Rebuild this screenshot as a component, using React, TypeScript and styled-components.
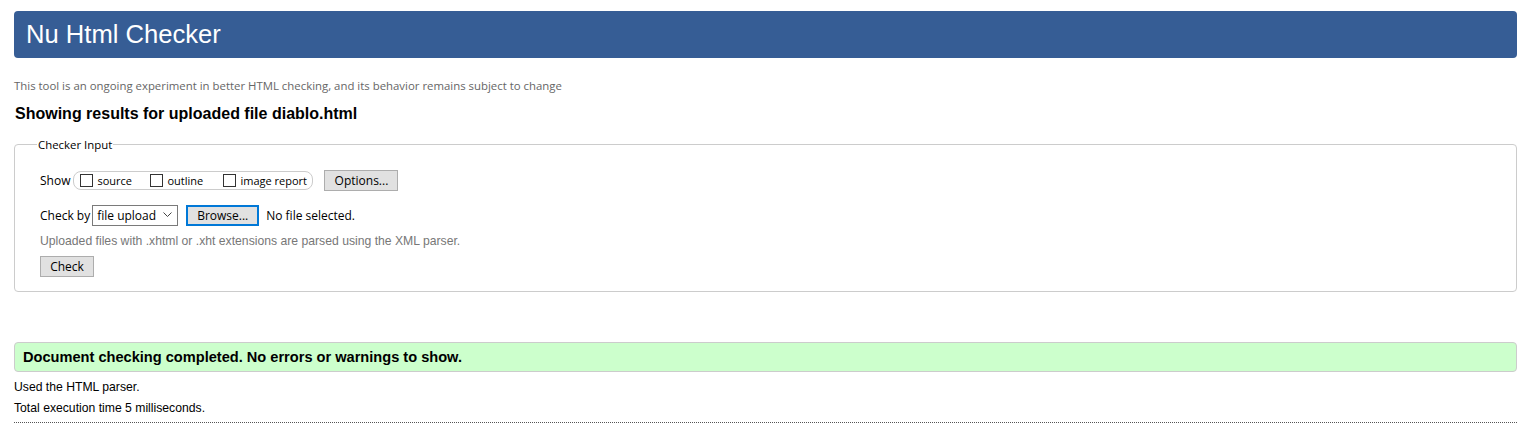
import React from "react";
import styled, { createGlobalStyle } from "styled-components";

const Global = createGlobalStyle`
  html, body { margin: 0; padding: 0; background: #fff; }
  body { font-family: "Liberation Sans", Arial, sans-serif; color: #000; }
`;

const Page = styled.div`
  padding: 11px 16px 0 14px;
  display: flex;
  flex-direction: column;
`;

const Header = styled.h1`
  margin: 0;
  height: 47px;
  background: #365d95;
  border-radius: 4px;
  color: #fff;
  font: 400 25.6px "Liberation Sans", Arial, sans-serif;
  display: flex;
  align-items: center;
  padding-left: 12px;
`;

const Intro = styled.p`
  margin: 20px 0 0 0;
  font: 400 11.4px "Open Sans", sans-serif;
  color: #666;
`;

const Title = styled.h2`
  margin: 12px 0 0 1px;
  font: 700 16px "Liberation Sans", Arial, sans-serif;
  color: #000;
`;

const Fieldset = styled.fieldset`
  margin: 14px 0 0 0;
  border: 1px solid #ccc;
  border-radius: 4px;
  padding: 8px 25px 15px 25px;
  display: flex;
  flex-direction: column;
`;

const Legend = styled.legend`
  margin-left: -3px;
  padding: 0 1px;
  font: 400 11.4px "Open Sans", sans-serif;
  color: #000;
`;

const Row = styled.div`
  display: flex;
  align-items: center;
  height: 20px;
  margin-top: ${(p: { $mt: number }) => p.$mt}px;
  font: 400 12px "Open Sans", sans-serif;
`;

const Label = styled.span`
  margin-right: 2px;
`;

const ToggleGroup = styled.div`
  display: flex;
  align-items: center;
  height: 17px;
  border: 1px solid #ccc;
  border-radius: 8px;
  padding: 0 6px;
  width: 226px;
  margin-left: 1px;
`;

const Toggle = styled.label`
  display: flex;
  align-items: center;
  font: 400 11px "Open Sans", sans-serif;
  width: ${(p: { $w: number }) => p.$w}px;
  flex: none;
`;

const Box = styled.span`
  width: 11px;
  height: 11px;
  border: 1px solid #333;
  margin-right: 4px;
  box-sizing: content-box;
  display: inline-block;
`;

const Button = styled.button<{ $focus?: boolean; $w: number }>`
  box-sizing: border-box;
  height: 21px;
  width: ${(p) => p.$w}px;
  background: #e1e1e1;
  border: ${(p) => (p.$focus ? "2px solid #0078d7" : "1px solid #adadad")};
  border-radius: 0;
  padding: 0;
  font: 400 12px "Open Sans", sans-serif;
  color: #000;
`;

const Select = styled.div`
  box-sizing: border-box;
  width: 86px;
  height: 21px;
  border: 1px solid #7a7a7a;
  display: flex;
  align-items: center;
  justify-content: space-between;
  padding: 0 5px 0 4px;
  font: 400 12px "Open Sans", sans-serif;
  margin-right: 8px;
`;

const Plain = styled.span`
  margin-left: 7px;
`;

const Hint = styled.p`
  margin: 9px 0 0 0;
  font: 400 12.2px "Liberation Sans", Arial, sans-serif;
  color: #777;
`;

const Success = styled.div`
  margin-top: 50px;
  height: 30px;
  box-sizing: border-box;
  background: #ccffcc;
  border: 1px solid #ccc;
  border-radius: 4px;
  display: flex;
  align-items: center;
  padding-left: 8px;
  font: 700 14.6px "Liberation Sans", Arial, sans-serif;
  color: #000;
`;

const Detail = styled.p`
  margin: ${(p: { $mt: number }) => p.$mt}px 0 0 0;
  font: 400 12.2px "Liberation Sans", Arial, sans-serif;
  color: #000;
  line-height: 14px;
`;

const Rule = styled.hr`
  margin: 7px 0 0 0;
  border: 0;
  border-top: 1px dotted #555;
  height: 0;
`;

function Chevron() {
  return (
    <svg width="9" height="6" viewBox="0 0 9 6">
      <path d="M0.5 0.5 L4.5 4.5 L8.5 0.5" fill="none" stroke="#444" strokeWidth="1" />
    </svg>
  );
}

export default function App() {
  return (
    <>
      <Global />
      <Page>
        <Header>Nu Html Checker</Header>
        <Intro>
          This tool is an ongoing experiment in better HTML checking, and its behavior remains subject to change
        </Intro>
        <Title>Showing results for uploaded file diablo.html</Title>
        <Fieldset>
          <Legend>Checker Input</Legend>
          <Row $mt={10}>
            <Label>Show</Label>
            <ToggleGroup>
              <Toggle $w={70}>
                <Box />
                source
              </Toggle>
              <Toggle $w={73}>
                <Box />
                outline
              </Toggle>
              <Toggle $w={84}>
                <Box />
                image report
              </Toggle>
            </ToggleGroup>
            <Button $w={74} style={{ marginLeft: 11 }}>Options...</Button>
          </Row>
          <Row $mt={15}>
            <Label>Check by</Label>
            <Select>
              file upload
              <Chevron />
            </Select>
            <Button $w={73} $focus>
              Browse...
            </Button>
            <Plain>No file selected.</Plain>
          </Row>
          <Hint>Uploaded files with .xhtml or .xht extensions are parsed using the XML parser.</Hint>
          <Row $mt={8}>
            <Button $w={54}>Check</Button>
          </Row>
        </Fieldset>
        <Success>Document checking completed. No errors or warnings to show.</Success>
        <Detail $mt={8}>Used the HTML parser.</Detail>
        <Detail $mt={7}>Total execution time 5 milliseconds.</Detail>
        <Rule />
      </Page>
    </>
  );
}
